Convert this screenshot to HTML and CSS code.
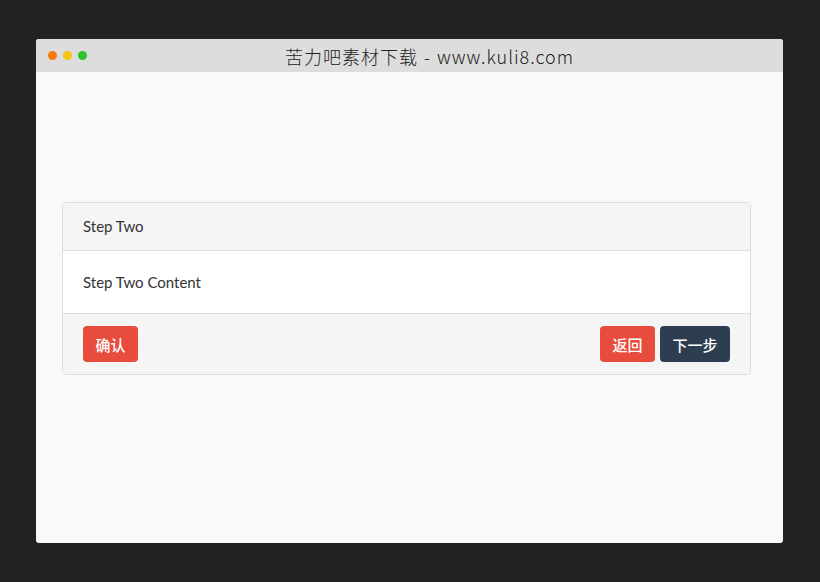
FILE: index.html
```html
<!DOCTYPE html>
<html lang="zh-CN">
  <head>
    <meta charset="UTF-8">
    <title>苦力吧素材下载</title>
    <link rel="stylesheet" href="styles.css">
  </head>
  <body>
    <div class="window">
      <div class="titlebar">
        <div class="dots">
          <span class="dot orange"></span>
          <span class="dot yellow"></span>
          <span class="dot green"></span>
        </div>
        <div class="title">苦力吧素材下载 - www.kuli8.com</div>
      </div>
      <div class="content">
        <div class="panel">
          <div class="panel-heading">Step Two</div>
          <div class="panel-body">Step Two Content</div>
          <div class="panel-footer">
            <button class="btn btn-red">确认</button>
            <div class="right">
              <button class="btn btn-red">返回</button>
              <button class="btn btn-dark">下一步</button>
            </div>
          </div>
        </div>
      </div>
    </div>
  </body>
</html>
```

FILE: styles.css
```css
body {
  margin: 0;
  background-color: #222222;
  font-family: Lato, "Noto Sans CJK SC", sans-serif;
}

.window {
  width: 747px;
  height: 504px;
  margin: 39px 0 0 36px;
  border-radius: 3px;
  overflow: hidden;
  background: #f9f9f9;
}

.titlebar {
  position: relative;
  height: 33px;
  padding-left: 40px;
  background: #dddddd;
  display: flex;
  align-items: center;
  justify-content: center;
}

.dots {
  position: absolute;
  left: 12px;
  top: 12px;
  display: flex;
  gap: 6px;
}

.dot {
  width: 9px;
  height: 9px;
  border-radius: 50%;
}

.orange { background: #f7780e; }
.yellow { background: #f5c312; }
.green { background: #2ec22e; }

.title {
  font-family: "Noto Sans CJK SC", sans-serif;
  font-weight: 300;
  font-size: 18px;
  color: #222;
  letter-spacing: 1px;
  word-spacing: 1px;
}

.content {
  padding: 130px 32px 0 26px;
}

.panel {
  border: 1px solid #dddddd;
  border-radius: 4px;
  background: #fff;
  color: #333;
  font-size: 15px;
}

.panel-heading {
  height: 47px;
  line-height: 47px;
  padding: 0 20px;
  background: #f5f5f5;
  border-bottom: 1px solid #dddddd;
  border-radius: 4px 4px 0 0;
}

.panel-body {
  height: 62px;
  line-height: 62px;
  padding: 0 20px;
}

.panel-footer {
  display: flex;
  justify-content: space-between;
  padding: 12px 20px 12px 20px;
  background: #f5f5f5;
  border-top: 1px solid #dddddd;
  border-radius: 0 0 4px 4px;
}

.right {
  display: flex;
  gap: 5px;
}

.btn {
  height: 36px;
  padding: 0 12.5px;
  border: 0;
  border-radius: 4px;
  color: #fff;
  font-family: "Noto Sans CJK SC", sans-serif;
  font-size: 15px;
  font-weight: 500;
}

.btn-red { background: #e74c3c; }
.btn-dark { background: #2c3e50; }
```
